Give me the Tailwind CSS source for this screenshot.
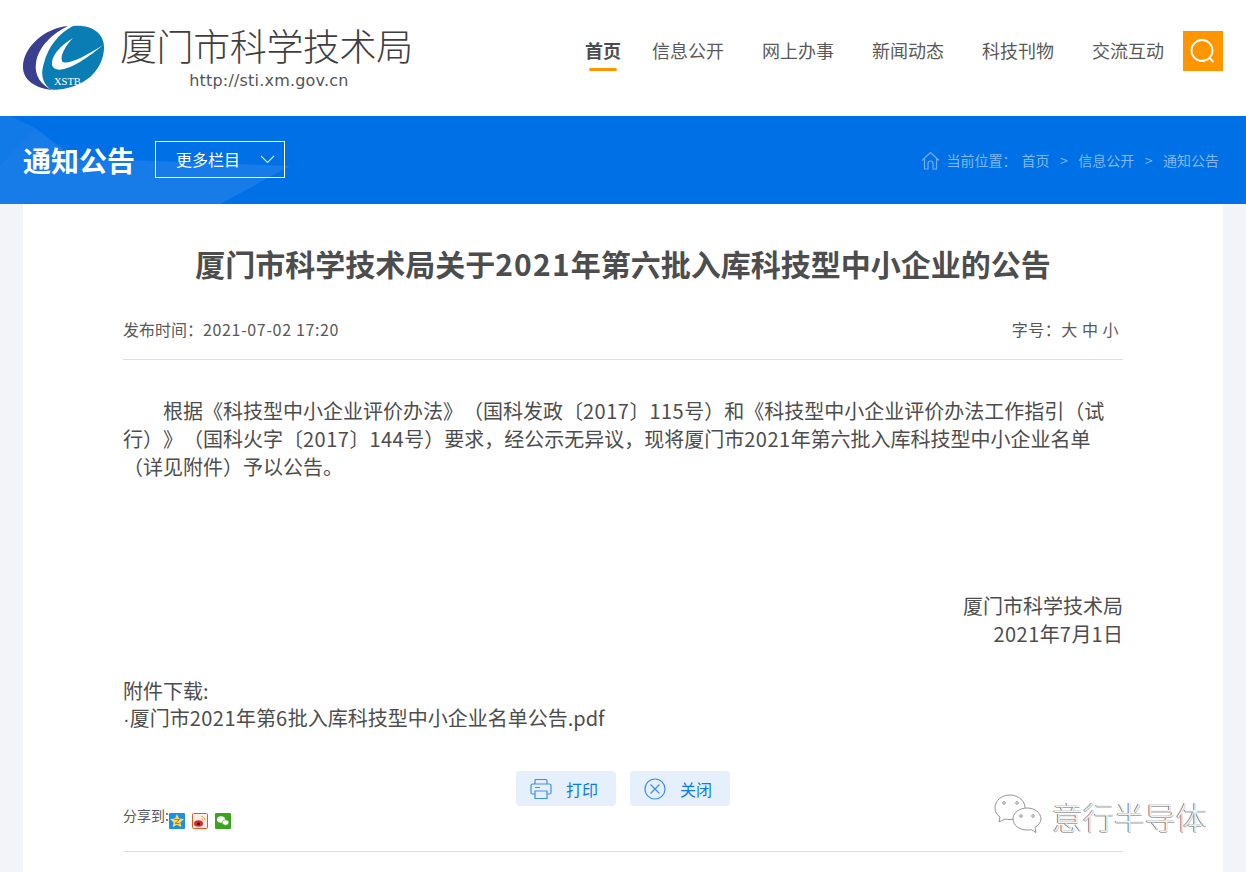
<!DOCTYPE html>
<html lang="zh-CN"><head><meta charset="utf-8"><script src="https://cdn.jsdelivr.net/npm/@tailwindcss/browser@4"></script></head>
<body class="bg-[#f3f4f9] font-['Noto_Sans_CJK_SC','Noto_Sans',sans-serif] text-[#4d4d4d] overflow-hidden h-[872px] relative [text-spacing-trim:space-all]">
<header class="h-[116px] bg-white flex justify-between pl-[23px] pr-[23px]">
  <div class="flex items-start">
    <svg class="mt-[25px]" width="84" height="66" viewBox="0 0 84 66">
      <path d="M45 1C22 3 0 22 0 42C0 55 12 63 29 65C18 60 11 50 13 38C15 22 30 8 45 1Z" fill="#3a3f8f"/>
      <path d="M50 1C68 -1 82 8 81 24C80 42 66 60 40 64C34 65 29 65 27 64C20 58 17 50 21 38C25 22 36 8 50 1Z" fill="#0a7db5"/>
      <path d="M50 13C36 21 28 32 29 40C32 50 52 44 80 20C60 33 42 41 39 36C37 30 43 20 50 13Z" fill="#fff"/>
      <text x="31" y="60" font-size="10.5" fill="#fff" font-family="Liberation Serif">XSTB</text>
    </svg>
    <div class="ml-[13px] pt-[20px] flex flex-col items-center">
      <div class="text-[37px] leading-[50px] font-light tracking-[-0.4px] text-[#3f3f3f] whitespace-nowrap">厦门市科学技术局</div>
      <div class="text-[16px] leading-[18px] tracking-[0.2px] text-[#555] font-['DejaVu_Sans',sans-serif] ml-[5px] mt-[2px]">http://sti.xm.gov.cn</div>
    </div>
  </div>
  <div class="flex items-start pt-[31px]">
    <nav class="flex text-[18px] leading-[38px] text-[#595959] whitespace-nowrap">
      <a class="relative font-bold text-[#4d4d4d] mr-[31px]">首页<span class="absolute left-[4px] right-[4px] top-[37px] h-[3px] rounded-full bg-[#ff9600]"></span></a>
      <a class="mr-[38px]">信息公开</a><a class="mr-[38px]">网上办事</a><a class="mr-[38px]">新闻动态</a><a class="mr-[38px]">科技刊物</a><a>交流互动</a>
    </nav>
    <div class="ml-[19px] w-[40px] h-[40px] bg-[#ff9600] flex items-center justify-center">
      <svg width="28" height="28" viewBox="0 0 28 28" fill="none" stroke="#fff" stroke-width="1.8"><circle cx="13" cy="13.500" r="10.500"/><path d="M20.500 21l4 4"/></svg>
    </div>
  </div>
</header>
<section class="relative h-[88px] bg-[#0070e6] overflow-hidden flex items-center justify-between pl-[23px] pr-[27px]">
  <svg class="absolute left-0 top-0" width="300" height="88" viewBox="0 0 300 88"><path d="M0 0H10L35 12L0 50Z" fill="#fff" fill-opacity=".07"/><path d="M0 50L35 12L75 42L290 50L220 88H0Z" fill="#fff" fill-opacity=".09"/></svg>
  <div class="relative flex items-center">
    <h2 class="text-[28px] leading-[40px] font-bold text-white">通知公告</h2>
    <div class="ml-[20px] mb-[2px] w-[130px] h-[37px] border border-white flex items-center justify-between pl-[20px] pr-[9px] text-white text-[16px]"><span>更多栏目</span>
      <svg width="15" height="9" viewBox="0 0 15 9" fill="none" stroke="#d4e6fb" stroke-width="1.1"><path d="M1 1l6.500 6.500L14 1"/></svg>
    </div>
  </div>
  <div class="relative flex items-center text-[14px] text-[#7fb8f3] whitespace-nowrap">
    <svg class="mr-[6px]" width="19" height="19" viewBox="0 0 19 19" fill="none" stroke="#6eaef2" stroke-width="1.2"><path d="M1 9.500L9.500 1.500L18 9.500M3.500 8V18H7V12.500a2.500 2.500 0 0 1 5 0V18H15.500V8"/></svg>
    <span>当前位置：</span><span class="ml-[5px]">首页</span><span class="mx-[10.500px]">&gt;</span><span>信息公开</span><span class="mx-[10.500px]">&gt;</span><span>通知公告</span>
  </div>
</section>
<main class="mx-[23px] bg-white h-[668px] px-[100px]">
  <h1 class="pt-[38px] text-center text-[30px] leading-[42px] font-bold text-[#4d4d4d] whitespace-nowrap">厦门市科学技术局关于<span class="tracking-[1.2px]">2021</span>年第六批入库科技型中小企业的公告</h1>
  <div class="mt-[30px] h-[46px] border-b border-[#dfdfdf] flex justify-between text-[16px] leading-[30px] text-[#595959]">
    <span>发布时间：<span class="tracking-[0.65px]">2021-07-02 17:20</span></span><span class="tracking-[0.5px] mr-[4px]">字号：大 中 小</span>
  </div>
  <article class="pt-[37px] text-[20px] leading-[28px] text-[#4d4d4d]">
    <p class="indent-[40px]">根据《科技型中小企业评价办法》（国科发政〔<span class="tracking-[0.5px]">2017</span>〕<span class="tracking-[0.5px]">115</span>号）和《科技型中小企业评价办法工作指引（试行）》（国科火字〔<span class="tracking-[0.5px]">2017</span>〕<span class="tracking-[0.5px]">144</span>号）要求，经公示无异议，现将厦门市<span class="tracking-[0.5px]">2021</span>年第六批入库科技型中小企业名单（详见附件）予以公告。</p>
    <p class="mt-[111px] text-right">厦门市科学技术局</p>
    <p class="text-right"><span class="tracking-[0.5px]">2021</span>年<span class="tracking-[0.5px]">7</span>月<span class="tracking-[0.5px]">1</span>日</p>
    <p class="mt-[29px]">附件下载:</p>
    <p class="-mt-[1px]"><span class="font-['Liberation_Sans']">·</span>厦门市<span class="tracking-[0.5px]">2021</span>年第<span class="tracking-[0.5px]">6</span>批入库科技型中小企业名单公告.pdf</p>
  </article>
  <div class="mt-[38px] flex justify-center gap-[14px] text-[16px] text-[#0a7aec]">
    <div class="w-[100px] h-[35px] rounded-[4px] bg-[#e6f0fc] flex items-center pl-[14px]">
      <svg width="22" height="22" viewBox="0 0 22 22" fill="none" stroke="#3b8fec" stroke-width="1.2"><path d="M5 6V2.500a1 1 0 0 1 1-1H16a1 1 0 0 1 1 1V6M5 16H2.500a1.500 1.500 0 0 1-1.500-1.500V7.500A1.500 1.500 0 0 1 2.500 6H19.500A1.500 1.500 0 0 1 21 7.500V14.500A1.500 1.500 0 0 1 19.500 16H17M5 13H17V20.500H5ZM5 9.500H10"/></svg>
      <span class="ml-[14px]">打印</span>
    </div>
    <div class="w-[100px] h-[35px] rounded-[4px] bg-[#e6f0fc] flex items-center pl-[14px]">
      <svg width="22" height="22" viewBox="0 0 22 22" fill="none" stroke="#3b8fec" stroke-width="1.2"><circle cx="11" cy="11" r="10"/><path d="M6.500 6.500L15.500 15.500M15.500 6.500L6.500 15.500"/></svg>
      <span class="ml-[14px]">关闭</span>
    </div>
  </div>
  <div class="h-[46px] border-b border-[#dfdfdf] flex items-start text-[14px] leading-[18px] text-[#595959]">
    <span class="whitespace-nowrap">分享到:</span>
    <div class="flex gap-[7px] mt-[7px]">
      <svg width="16" height="16" viewBox="0 0 16 16"><rect width="16" height="16" rx="1" fill="#1b8fe6"/><path d="M8 1l2.100 4.500 4.900.6-3.600 3.300 1 4.800L8 11.800l-4.400 2.400 1-4.800L1 6.100l4.900-.6z" fill="#fbd85a"/><path d="M5.500 6.500h5L6 10.500h4.500" fill="none" stroke="#c9761a" stroke-width="1"/></svg>
      <svg width="16" height="16" viewBox="0 0 16 16"><rect x=".5" y=".5" width="15" height="15" rx="1" fill="#fbeeea" stroke="#e8571f"/><ellipse cx="6.500" cy="10.500" rx="4.500" ry="3.200" fill="#e02b2b"/><circle cx="6.500" cy="10.800" r="1.500" fill="#222"/><path d="M9.500 3.500a3.500 3.500 0 0 1 3.500 4M9.500 5.800a1.500 1.500 0 0 1 1.500 1.700" fill="none" stroke="#f0a030" stroke-width="1"/></svg>
      <svg width="16" height="16" viewBox="0 0 16 16"><rect width="16" height="16" rx="1" fill="#3ba31c"/><ellipse cx="6" cy="6.500" rx="4" ry="3.200" fill="#fff"/><ellipse cx="10.500" cy="9.500" rx="3.300" ry="2.700" fill="#fff" stroke="#3ba31c" stroke-width=".6"/></svg>
    </div>
  </div>
</main>
<div class="absolute left-[993px] top-[794px] flex items-center">
  <svg width="50" height="42" viewBox="0 0 50 42" fill="#fff" stroke="#8a8a8a" stroke-width=".9"><path d="M17 1C8 1 2 7 2 14c0 4 2 7 5 9l-1 5 6-3c2 .500 3 .500 5 .500 9 0 15-6 15-12S26 1 17 1Z"/><path d="M34 14c-8 0-14 5-14 11s6 11 14 11c2 0 3 0 4-.500l5 3-1-5c3-2 6-5 6-8.500 0-6-6-11-14-11Z"/><circle cx="11" cy="9" r="1.300"/><circle cx="24" cy="9" r="1.300"/><circle cx="28" cy="22" r="1.300"/><circle cx="40" cy="22" r="1.300"/></svg>
  <span class="ml-[9px] mt-[2px] text-[31px] leading-[40px] font-light text-[#f2f2f2] [text-shadow:-1px_0_0_#777,0_1px_0_#aaa]">意行半导体</span>
</div>
</body></html>
